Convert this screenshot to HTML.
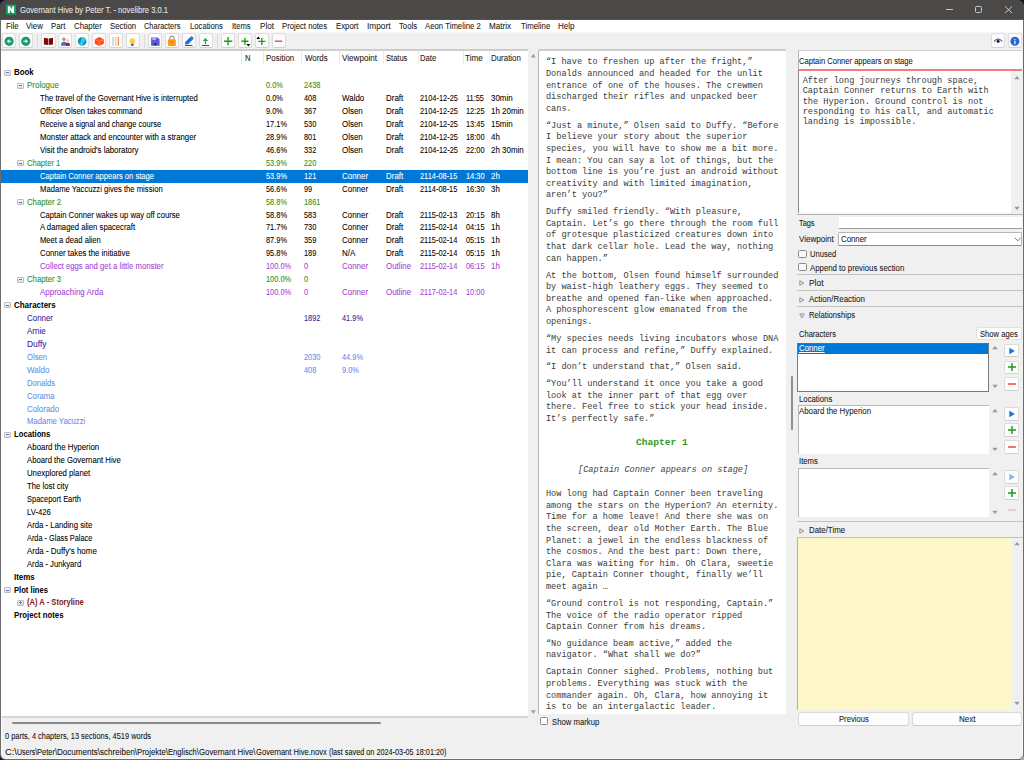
<!DOCTYPE html>
<html><head><meta charset="utf-8"><title>novelibre</title>
<style>
html,body{margin:0;padding:0;}
body{width:1024px;height:760px;overflow:hidden;background:#f0f0f0;position:relative;font-family:"Liberation Sans",sans-serif;}
body>div,body>svg{position:absolute;}
.t{white-space:pre;-webkit-text-stroke:0.07px currentColor;}
</style></head><body>
<div style="left:0px;top:0px;width:1024px;height:19px;background:#4b4947;"></div>
<div style="left:0px;top:19px;width:1024px;height:1px;background:#565452;"></div>
<svg style="left:0;top:0;position:absolute" width="20" height="20" viewBox="0 0 20 20"><rect x="6" y="4.6" width="10" height="10.1" fill="#12a064"/><path d="M7.9 6.2H9.9L12.2 9.6V6.2H14.1V13H12.1L9.8 9.6V13H7.9Z" fill="#fff"/></svg>
<div class="t" style="left:20.00px;top:4.22px;font-family:'Liberation Sans', sans-serif;font-size:8.6px;line-height:12px;color:#e6e6e6;transform:scaleX(0.8867);transform-origin:0 0;">Governant Hive by Peter T. - novelibre 3.0.1</div>
<div style="left:946.2px;top:9.4px;width:6.9px;height:1px;background:#c4c4c4;"></div>
<div style="left:974.9px;top:6.2px;width:7.3px;height:6.9px;background:none;border:1px solid #cacaca;border-radius:1.5px;box-sizing:border-box;"></div>
<svg style="left:1004px;top:6px;position:absolute" width="9" height="8" viewBox="0 0 9 8"><path d="M1.1 0.4L8.1 7.1M8.1 0.4L1.1 7.1" stroke="#d4d4d4" stroke-width="0.95"/></svg>
<div style="left:1px;top:20px;width:1022px;height:12px;background:#ffffff;"></div>
<div class="t" style="left:5.50px;top:20.15px;font-family:'Liberation Sans', sans-serif;font-size:8.5px;line-height:12px;color:#1a1a1a;transform:scaleX(0.9200);transform-origin:0 0;">File</div>
<div class="t" style="left:26.00px;top:20.15px;font-family:'Liberation Sans', sans-serif;font-size:8.5px;line-height:12px;color:#1a1a1a;transform:scaleX(0.9200);transform-origin:0 0;">View</div>
<div class="t" style="left:51.00px;top:20.15px;font-family:'Liberation Sans', sans-serif;font-size:8.5px;line-height:12px;color:#1a1a1a;transform:scaleX(0.9200);transform-origin:0 0;">Part</div>
<div class="t" style="left:74.00px;top:20.15px;font-family:'Liberation Sans', sans-serif;font-size:8.5px;line-height:12px;color:#1a1a1a;transform:scaleX(0.9200);transform-origin:0 0;">Chapter</div>
<div class="t" style="left:110.00px;top:20.15px;font-family:'Liberation Sans', sans-serif;font-size:8.5px;line-height:12px;color:#1a1a1a;transform:scaleX(0.9200);transform-origin:0 0;">Section</div>
<div class="t" style="left:144.30px;top:20.15px;font-family:'Liberation Sans', sans-serif;font-size:8.5px;line-height:12px;color:#1a1a1a;transform:scaleX(0.8755);transform-origin:0 0;">Characters</div>
<div class="t" style="left:189.80px;top:20.15px;font-family:'Liberation Sans', sans-serif;font-size:8.5px;line-height:12px;color:#1a1a1a;transform:scaleX(0.9041);transform-origin:0 0;">Locations</div>
<div class="t" style="left:231.80px;top:20.15px;font-family:'Liberation Sans', sans-serif;font-size:8.5px;line-height:12px;color:#1a1a1a;transform:scaleX(0.8998);transform-origin:0 0;">Items</div>
<div class="t" style="left:259.50px;top:20.15px;font-family:'Liberation Sans', sans-serif;font-size:8.5px;line-height:12px;color:#1a1a1a;transform:scaleX(0.9552);transform-origin:0 0;">Plot</div>
<div class="t" style="left:282.20px;top:20.15px;font-family:'Liberation Sans', sans-serif;font-size:8.5px;line-height:12px;color:#1a1a1a;transform:scaleX(0.9068);transform-origin:0 0;">Project notes</div>
<div class="t" style="left:335.60px;top:20.15px;font-family:'Liberation Sans', sans-serif;font-size:8.5px;line-height:12px;color:#1a1a1a;transform:scaleX(0.9154);transform-origin:0 0;">Export</div>
<div class="t" style="left:366.80px;top:20.15px;font-family:'Liberation Sans', sans-serif;font-size:8.5px;line-height:12px;color:#1a1a1a;transform:scaleX(0.9754);transform-origin:0 0;">Import</div>
<div class="t" style="left:399.00px;top:20.15px;font-family:'Liberation Sans', sans-serif;font-size:8.5px;line-height:12px;color:#1a1a1a;transform:scaleX(0.9071);transform-origin:0 0;">Tools</div>
<div class="t" style="left:425.20px;top:20.15px;font-family:'Liberation Sans', sans-serif;font-size:8.5px;line-height:12px;color:#1a1a1a;transform:scaleX(0.9155);transform-origin:0 0;">Aeon Timeline 2</div>
<div class="t" style="left:489.40px;top:20.15px;font-family:'Liberation Sans', sans-serif;font-size:8.5px;line-height:12px;color:#1a1a1a;transform:scaleX(0.9507);transform-origin:0 0;">Matrix</div>
<div class="t" style="left:520.90px;top:20.15px;font-family:'Liberation Sans', sans-serif;font-size:8.5px;line-height:12px;color:#1a1a1a;transform:scaleX(0.9210);transform-origin:0 0;">Timeline</div>
<div class="t" style="left:558.40px;top:20.15px;font-family:'Liberation Sans', sans-serif;font-size:8.5px;line-height:12px;color:#1a1a1a;transform:scaleX(0.9437);transform-origin:0 0;">Help</div>
<div style="left:1px;top:32px;width:1022px;height:18px;background:#f0f0f0;"></div>
<div style="left:1px;top:32px;width:1022px;height:2px;background:linear-gradient(#fafafa,#f0f0f0);"></div>
<div style="left:2.1px;top:33.4px;width:14.3px;height:15px;background:#fcfcfc;border:1px solid #dddddd;border-bottom-color:#d2d2d2;border-radius:2.5px;box-sizing:border-box;"></div>
<div style="left:18.75px;top:33.4px;width:14.3px;height:15px;background:#fcfcfc;border:1px solid #dddddd;border-bottom-color:#d2d2d2;border-radius:2.5px;box-sizing:border-box;"></div>
<div style="left:41.3px;top:33.4px;width:14.3px;height:15px;background:#fcfcfc;border:1px solid #dddddd;border-bottom-color:#d2d2d2;border-radius:2.5px;box-sizing:border-box;"></div>
<div style="left:58.1px;top:33.4px;width:14.3px;height:15px;background:#fcfcfc;border:1px solid #dddddd;border-bottom-color:#d2d2d2;border-radius:2.5px;box-sizing:border-box;"></div>
<div style="left:74.9px;top:33.4px;width:14.3px;height:15px;background:#fcfcfc;border:1px solid #dddddd;border-bottom-color:#d2d2d2;border-radius:2.5px;box-sizing:border-box;"></div>
<div style="left:91.9px;top:33.4px;width:14.3px;height:15px;background:#fcfcfc;border:1px solid #dddddd;border-bottom-color:#d2d2d2;border-radius:2.5px;box-sizing:border-box;"></div>
<div style="left:108.9px;top:33.4px;width:14.3px;height:15px;background:#fcfcfc;border:1px solid #dddddd;border-bottom-color:#d2d2d2;border-radius:2.5px;box-sizing:border-box;"></div>
<div style="left:125.7px;top:33.4px;width:14.3px;height:15px;background:#fcfcfc;border:1px solid #dddddd;border-bottom-color:#d2d2d2;border-radius:2.5px;box-sizing:border-box;"></div>
<div style="left:148.1px;top:33.4px;width:14.3px;height:15px;background:#fcfcfc;border:1px solid #dddddd;border-bottom-color:#d2d2d2;border-radius:2.5px;box-sizing:border-box;"></div>
<div style="left:165px;top:33.4px;width:14.3px;height:15px;background:#fcfcfc;border:1px solid #dddddd;border-bottom-color:#d2d2d2;border-radius:2.5px;box-sizing:border-box;"></div>
<div style="left:181.9px;top:33.4px;width:14.3px;height:15px;background:#fcfcfc;border:1px solid #dddddd;border-bottom-color:#d2d2d2;border-radius:2.5px;box-sizing:border-box;"></div>
<div style="left:198.7px;top:33.4px;width:14.3px;height:15px;background:#fcfcfc;border:1px solid #dddddd;border-bottom-color:#d2d2d2;border-radius:2.5px;box-sizing:border-box;"></div>
<div style="left:221.1px;top:33.4px;width:14.3px;height:15px;background:#fcfcfc;border:1px solid #dddddd;border-bottom-color:#d2d2d2;border-radius:2.5px;box-sizing:border-box;"></div>
<div style="left:238px;top:33.4px;width:14.3px;height:15px;background:#fcfcfc;border:1px solid #dddddd;border-bottom-color:#d2d2d2;border-radius:2.5px;box-sizing:border-box;"></div>
<div style="left:254.9px;top:33.4px;width:14.3px;height:15px;background:#fcfcfc;border:1px solid #dddddd;border-bottom-color:#d2d2d2;border-radius:2.5px;box-sizing:border-box;"></div>
<div style="left:271.8px;top:33.4px;width:14.3px;height:15px;background:#fcfcfc;border:1px solid #dddddd;border-bottom-color:#d2d2d2;border-radius:2.5px;box-sizing:border-box;"></div>
<div style="left:37.3px;top:34px;width:1px;height:15px;background:#dcdcdc;"></div>
<div style="left:143.5px;top:34px;width:1px;height:15px;background:#dcdcdc;"></div>
<div style="left:216.6px;top:34px;width:1px;height:15px;background:#dcdcdc;"></div>
<div style="left:990.8px;top:33.4px;width:14.3px;height:15px;background:#fcfcfc;border:1px solid #dddddd;border-bottom-color:#d2d2d2;border-radius:2.5px;box-sizing:border-box;"></div>
<div style="left:1007.6px;top:33.4px;width:14.3px;height:15px;background:#fcfcfc;border:1px solid #dddddd;border-bottom-color:#d2d2d2;border-radius:2.5px;box-sizing:border-box;"></div>
<svg style="position:absolute;left:0;top:0" width="1024" height="60" viewBox="0 0 1024 60"><circle cx="9.1" cy="41.3" r="4.6" fill="#169a6a"/><path d="M6.7 41.3L9.3 39.1V43.5Z" fill="#e8f6f0"/><rect x="9" y="40.7" width="2.4" height="1.2" fill="#e8f6f0"/><circle cx="25.8" cy="41.3" r="4.6" fill="#169a6a"/><path d="M28.1 41.3L25.5 39.1V43.5Z" fill="#e8f6f0"/><rect x="23.4" y="40.7" width="2.4" height="1.2" fill="#e8f6f0"/><path d="M43.9 37.8L48.2 38.4V45L43.9 44.4Z M48.8 38.4L53 37.8V44.4L48.8 45Z" fill="#7a0a0a"/><circle cx="63.9" cy="39.2" r="1.75" fill="#c8925a"/><path d="M60.9 45.8Q60.9 41.7 64.15 41.7Q67.4 41.7 67.4 45.8Z" fill="#3b6fd4"/><circle cx="67.8" cy="40.6" r="1.35" fill="#f2c9a0"/><path d="M65.9 45.8Q65.9 42.8 68 42.8Q70.1 42.8 70.1 45.8Z" fill="#9c1040"/><circle cx="82.1" cy="41.4" r="4.4" fill="#34c6ee"/><path d="M78.2 40.2Q79.2 37.6 81.6 37.2Q81.2 39.6 80.6 41.6Q80.1 43.2 79.2 44Q78 42.4 78.2 40.2Z M82.4 45.7Q84.8 44.9 85.9 42.6Q86.4 41 86 39.8Q84.6 41.6 83.4 43.2Z" fill="#0b9190"/><path d="M99.3 37L103.8 39.3V43.8L99.3 46.1L94.8 43.8V39.3Z" fill="#ff4a1a"/><path d="M95.3 39.5L99.3 41.6L103.3 39.5M99.3 41.6V45.5" stroke="#ffd0c0" stroke-width="0.5" fill="none"/><rect x="112.5" y="37" width="1.1" height="8.8" fill="#a8c0e8"/><rect x="115.2" y="37" width="1.1" height="8.8" fill="#ffd000"/><rect x="117.8" y="37" width="1.1" height="8.8" fill="#ff6a50"/><circle cx="132.4" cy="41" r="2.8" fill="#ffc84e"/><rect x="131.2" y="43.6" width="2.4" height="2.3" fill="#555"/><path d="M151.1 37.6H157.6L159.6 39.6V45.8H151.1Z" fill="#5a5ad2"/><rect x="152.3" y="37.6" width="3.6" height="2.4" fill="#c8a8e8"/><circle cx="155.4" cy="44.3" r="1" fill="#111"/><path d="M169.7 39.6V38.4A2.2 2.2 0 0 1 174.1 38.4V39.6" stroke="#7a7a7a" stroke-width="1" fill="none"/><rect x="167.9" y="39.3" width="7.9" height="6.7" rx="1.2" fill="#ff9a00"/><circle cx="171.9" cy="42.2" r="0.9" fill="#8a8a8a"/><path d="M184.9 44.3L185.3 42.1L190.8 36.6A1 1 0 0 1 192.2 36.6L193.3 37.7A1 1 0 0 1 193.3 39.1L187.8 44.6Z" fill="#1a6af0"/><path d="M191.2 37.6L192.2 38.6" stroke="#cfe0ff" stroke-width="0.5"/><rect x="185" y="45" width="7.5" height="1" fill="#5a4848"/><path d="M202.7 41.1L205.4 38.1L208.1 41.1Z" fill="#22a244"/><rect x="204.8" y="40.6" width="1.2" height="3.6" fill="#22a244"/><rect x="201.8" y="45" width="7.3" height="1" fill="#5a4848"/><path d="M224 41.2H232.3M228.1 37.1V45.3" stroke="#1aa01a" stroke-width="1.4"/><path d="M241.4 41.2H248.4M244.9 37.7V44.7" stroke="#1aa01a" stroke-width="1.4"/><path d="M246.5 44H250.3L248.4 46.5Z" fill="#000"/><path d="M258.4 41.4H265.4M261.9 37.9V44.9" stroke="#1aa01a" stroke-width="1.4"/><path d="M256.4 39H260.2L258.3 36.5Z" fill="#000"/><path d="M274.8 41.2H282.2" stroke="#f03a3a" stroke-width="1.3"/><path d="M994 41.5Q998.1 36.6 1002.3 41.5" stroke="#444" stroke-width="1.1" fill="none"/><circle cx="998.1" cy="41.3" r="1.5" fill="#1a1070"/><circle cx="1014.9" cy="41.3" r="4.5" fill="#2a66d0"/><rect x="1014.2" y="39" width="1.4" height="0.9" fill="#dde6f8"/><rect x="1014.2" y="40.6" width="1.4" height="3.5" fill="#dde6f8"/></svg>
<div style="left:1px;top:50.8px;width:527px;height:665.5px;background:#ffffff;"></div>
<div style="left:1px;top:49.2px;width:527px;height:1.6px;background:#cdcdcd;"></div>
<div style="left:241.4px;top:50.8px;width:1px;height:14.7px;background:#ebebeb;"></div>
<div style="left:263.3px;top:50.8px;width:1px;height:14.7px;background:#ebebeb;"></div>
<div style="left:301.4px;top:50.8px;width:1px;height:14.7px;background:#ebebeb;"></div>
<div style="left:339.4px;top:50.8px;width:1px;height:14.7px;background:#ebebeb;"></div>
<div style="left:382.5px;top:50.8px;width:1px;height:14.7px;background:#ebebeb;"></div>
<div style="left:417.5px;top:50.8px;width:1px;height:14.7px;background:#ebebeb;"></div>
<div style="left:462.5px;top:50.8px;width:1px;height:14.7px;background:#ebebeb;"></div>
<div style="left:488.6px;top:50.8px;width:1px;height:14.7px;background:#ebebeb;"></div>
<div class="t" style="left:244.80px;top:52.32px;font-family:'Liberation Sans', sans-serif;font-size:8.3px;line-height:12px;color:#1a1a1a;transform:scaleX(0.9200);transform-origin:0 0;">N</div>
<div class="t" style="left:266.40px;top:52.32px;font-family:'Liberation Sans', sans-serif;font-size:8.3px;line-height:12px;color:#1a1a1a;transform:scaleX(0.9583);transform-origin:0 0;">Position</div>
<div class="t" style="left:304.50px;top:52.32px;font-family:'Liberation Sans', sans-serif;font-size:8.3px;line-height:12px;color:#1a1a1a;transform:scaleX(0.9485);transform-origin:0 0;">Words</div>
<div class="t" style="left:341.70px;top:52.32px;font-family:'Liberation Sans', sans-serif;font-size:8.3px;line-height:12px;color:#1a1a1a;transform:scaleX(0.9797);transform-origin:0 0;">Viewpoint</div>
<div class="t" style="left:386.00px;top:52.32px;font-family:'Liberation Sans', sans-serif;font-size:8.3px;line-height:12px;color:#1a1a1a;transform:scaleX(0.9094);transform-origin:0 0;">Status</div>
<div class="t" style="left:420.30px;top:52.32px;font-family:'Liberation Sans', sans-serif;font-size:8.3px;line-height:12px;color:#1a1a1a;transform:scaleX(0.9241);transform-origin:0 0;">Date</div>
<div class="t" style="left:465.20px;top:52.32px;font-family:'Liberation Sans', sans-serif;font-size:8.3px;line-height:12px;color:#1a1a1a;transform:scaleX(0.9812);transform-origin:0 0;">Time</div>
<div class="t" style="left:491.40px;top:52.32px;font-family:'Liberation Sans', sans-serif;font-size:8.3px;line-height:12px;color:#1a1a1a;transform:scaleX(0.9530);transform-origin:0 0;">Duration</div>
<div style="left:4.4px;top:69.70000000000002px;width:6.3px;height:6.0px;background:linear-gradient(#fafafa,#dcdcdc);border:1px solid #bdbdbd;box-sizing:border-box;border-radius:1px;"></div>
<div style="left:5.9px;top:72.30000000000001px;width:3.3px;height:0.8px;background:#6272c8;"></div>
<div class="t" style="left:14.00px;top:66.32px;font-family:'Liberation Sans', sans-serif;font-size:8.3px;line-height:12px;color:#000;font-weight:bold;-webkit-text-stroke:0;transform:scaleX(0.9494);transform-origin:0 0;">Book</div>
<div style="left:17.4px;top:82.63000000000002px;width:6.3px;height:6.0px;background:linear-gradient(#fafafa,#dcdcdc);border:1px solid #bdbdbd;box-sizing:border-box;border-radius:1px;"></div>
<div style="left:18.9px;top:85.23000000000002px;width:3.3px;height:0.8px;background:#6272c8;"></div>
<div class="t" style="left:27.00px;top:79.25px;font-family:'Liberation Sans', sans-serif;font-size:8.3px;line-height:12px;color:#288e28;transform:scaleX(0.9603);transform-origin:0 0;">Prologue</div>
<div class="t" style="left:266.40px;top:79.25px;font-family:'Liberation Sans', sans-serif;font-size:8.3px;line-height:12px;color:#288e28;transform:scaleX(0.8930);transform-origin:0 0;">0.0%</div>
<div class="t" style="left:304.40px;top:79.25px;font-family:'Liberation Sans', sans-serif;font-size:8.3px;line-height:12px;color:#288e28;transform:scaleX(0.8930);transform-origin:0 0;">2438</div>
<div class="t" style="left:40.00px;top:92.18px;font-family:'Liberation Sans', sans-serif;font-size:8.3px;line-height:12px;color:#000;transform:scaleX(0.9267);transform-origin:0 0;">The travel of the Governant Hive is interrupted</div>
<div class="t" style="left:266.40px;top:92.18px;font-family:'Liberation Sans', sans-serif;font-size:8.3px;line-height:12px;color:#000;transform:scaleX(0.8930);transform-origin:0 0;">0.0%</div>
<div class="t" style="left:304.40px;top:92.18px;font-family:'Liberation Sans', sans-serif;font-size:8.3px;line-height:12px;color:#000;transform:scaleX(0.8930);transform-origin:0 0;">408</div>
<div class="t" style="left:342.00px;top:92.18px;font-family:'Liberation Sans', sans-serif;font-size:8.3px;line-height:12px;color:#000;transform:scaleX(0.9580);transform-origin:0 0;">Waldo</div>
<div class="t" style="left:386.00px;top:92.18px;font-family:'Liberation Sans', sans-serif;font-size:8.3px;line-height:12px;color:#000;transform:scaleX(0.9580);transform-origin:0 0;">Draft</div>
<div class="t" style="left:420.30px;top:92.18px;font-family:'Liberation Sans', sans-serif;font-size:8.3px;line-height:12px;color:#000;transform:scaleX(0.8930);transform-origin:0 0;">2104-12-25</div>
<div class="t" style="left:465.50px;top:92.18px;font-family:'Liberation Sans', sans-serif;font-size:8.3px;line-height:12px;color:#000;transform:scaleX(0.8930);transform-origin:0 0;">11:55</div>
<div class="t" style="left:491.30px;top:92.18px;font-family:'Liberation Sans', sans-serif;font-size:8.3px;line-height:12px;color:#000;transform:scaleX(0.9580);transform-origin:0 0;">30min</div>
<div class="t" style="left:40.00px;top:105.11px;font-family:'Liberation Sans', sans-serif;font-size:8.3px;line-height:12px;color:#000;transform:scaleX(0.9346);transform-origin:0 0;">Officer Olsen takes command</div>
<div class="t" style="left:266.40px;top:105.11px;font-family:'Liberation Sans', sans-serif;font-size:8.3px;line-height:12px;color:#000;transform:scaleX(0.8930);transform-origin:0 0;">9.0%</div>
<div class="t" style="left:304.40px;top:105.11px;font-family:'Liberation Sans', sans-serif;font-size:8.3px;line-height:12px;color:#000;transform:scaleX(0.8930);transform-origin:0 0;">367</div>
<div class="t" style="left:342.00px;top:105.11px;font-family:'Liberation Sans', sans-serif;font-size:8.3px;line-height:12px;color:#000;transform:scaleX(0.9580);transform-origin:0 0;">Olsen</div>
<div class="t" style="left:386.00px;top:105.11px;font-family:'Liberation Sans', sans-serif;font-size:8.3px;line-height:12px;color:#000;transform:scaleX(0.9580);transform-origin:0 0;">Draft</div>
<div class="t" style="left:420.30px;top:105.11px;font-family:'Liberation Sans', sans-serif;font-size:8.3px;line-height:12px;color:#000;transform:scaleX(0.8930);transform-origin:0 0;">2104-12-25</div>
<div class="t" style="left:465.50px;top:105.11px;font-family:'Liberation Sans', sans-serif;font-size:8.3px;line-height:12px;color:#000;transform:scaleX(0.8930);transform-origin:0 0;">12:25</div>
<div class="t" style="left:491.30px;top:105.11px;font-family:'Liberation Sans', sans-serif;font-size:8.3px;line-height:12px;color:#000;transform:scaleX(0.9580);transform-origin:0 0;">1h 20min</div>
<div class="t" style="left:40.00px;top:118.04px;font-family:'Liberation Sans', sans-serif;font-size:8.3px;line-height:12px;color:#000;transform:scaleX(0.9053);transform-origin:0 0;">Receive a signal and change course</div>
<div class="t" style="left:266.40px;top:118.04px;font-family:'Liberation Sans', sans-serif;font-size:8.3px;line-height:12px;color:#000;transform:scaleX(0.8930);transform-origin:0 0;">17.1%</div>
<div class="t" style="left:304.40px;top:118.04px;font-family:'Liberation Sans', sans-serif;font-size:8.3px;line-height:12px;color:#000;transform:scaleX(0.8930);transform-origin:0 0;">530</div>
<div class="t" style="left:342.00px;top:118.04px;font-family:'Liberation Sans', sans-serif;font-size:8.3px;line-height:12px;color:#000;transform:scaleX(0.9580);transform-origin:0 0;">Olsen</div>
<div class="t" style="left:386.00px;top:118.04px;font-family:'Liberation Sans', sans-serif;font-size:8.3px;line-height:12px;color:#000;transform:scaleX(0.9580);transform-origin:0 0;">Draft</div>
<div class="t" style="left:420.30px;top:118.04px;font-family:'Liberation Sans', sans-serif;font-size:8.3px;line-height:12px;color:#000;transform:scaleX(0.8930);transform-origin:0 0;">2104-12-25</div>
<div class="t" style="left:465.50px;top:118.04px;font-family:'Liberation Sans', sans-serif;font-size:8.3px;line-height:12px;color:#000;transform:scaleX(0.8930);transform-origin:0 0;">13:45</div>
<div class="t" style="left:491.30px;top:118.04px;font-family:'Liberation Sans', sans-serif;font-size:8.3px;line-height:12px;color:#000;transform:scaleX(0.9580);transform-origin:0 0;">15min</div>
<div class="t" style="left:40.00px;top:130.97px;font-family:'Liberation Sans', sans-serif;font-size:8.3px;line-height:12px;color:#000;transform:scaleX(0.9375);transform-origin:0 0;">Monster attack and encounter with a stranger</div>
<div class="t" style="left:266.40px;top:130.97px;font-family:'Liberation Sans', sans-serif;font-size:8.3px;line-height:12px;color:#000;transform:scaleX(0.8930);transform-origin:0 0;">28.9%</div>
<div class="t" style="left:304.40px;top:130.97px;font-family:'Liberation Sans', sans-serif;font-size:8.3px;line-height:12px;color:#000;transform:scaleX(0.8930);transform-origin:0 0;">801</div>
<div class="t" style="left:342.00px;top:130.97px;font-family:'Liberation Sans', sans-serif;font-size:8.3px;line-height:12px;color:#000;transform:scaleX(0.9580);transform-origin:0 0;">Olsen</div>
<div class="t" style="left:386.00px;top:130.97px;font-family:'Liberation Sans', sans-serif;font-size:8.3px;line-height:12px;color:#000;transform:scaleX(0.9580);transform-origin:0 0;">Draft</div>
<div class="t" style="left:420.30px;top:130.97px;font-family:'Liberation Sans', sans-serif;font-size:8.3px;line-height:12px;color:#000;transform:scaleX(0.8930);transform-origin:0 0;">2104-12-25</div>
<div class="t" style="left:465.50px;top:130.97px;font-family:'Liberation Sans', sans-serif;font-size:8.3px;line-height:12px;color:#000;transform:scaleX(0.8930);transform-origin:0 0;">18:00</div>
<div class="t" style="left:491.30px;top:130.97px;font-family:'Liberation Sans', sans-serif;font-size:8.3px;line-height:12px;color:#000;transform:scaleX(0.9580);transform-origin:0 0;">4h</div>
<div class="t" style="left:40.00px;top:143.90px;font-family:'Liberation Sans', sans-serif;font-size:8.3px;line-height:12px;color:#000;transform:scaleX(0.9446);transform-origin:0 0;">Visit the android&#x27;s laboratory</div>
<div class="t" style="left:266.40px;top:143.90px;font-family:'Liberation Sans', sans-serif;font-size:8.3px;line-height:12px;color:#000;transform:scaleX(0.8930);transform-origin:0 0;">46.6%</div>
<div class="t" style="left:304.40px;top:143.90px;font-family:'Liberation Sans', sans-serif;font-size:8.3px;line-height:12px;color:#000;transform:scaleX(0.8930);transform-origin:0 0;">332</div>
<div class="t" style="left:342.00px;top:143.90px;font-family:'Liberation Sans', sans-serif;font-size:8.3px;line-height:12px;color:#000;transform:scaleX(0.9580);transform-origin:0 0;">Olsen</div>
<div class="t" style="left:386.00px;top:143.90px;font-family:'Liberation Sans', sans-serif;font-size:8.3px;line-height:12px;color:#000;transform:scaleX(0.9580);transform-origin:0 0;">Draft</div>
<div class="t" style="left:420.30px;top:143.90px;font-family:'Liberation Sans', sans-serif;font-size:8.3px;line-height:12px;color:#000;transform:scaleX(0.8930);transform-origin:0 0;">2104-12-25</div>
<div class="t" style="left:465.50px;top:143.90px;font-family:'Liberation Sans', sans-serif;font-size:8.3px;line-height:12px;color:#000;transform:scaleX(0.8930);transform-origin:0 0;">22:00</div>
<div class="t" style="left:491.30px;top:143.90px;font-family:'Liberation Sans', sans-serif;font-size:8.3px;line-height:12px;color:#000;transform:scaleX(0.9580);transform-origin:0 0;">2h 30min</div>
<div style="left:17.4px;top:160.21px;width:6.3px;height:6.0px;background:linear-gradient(#fafafa,#dcdcdc);border:1px solid #bdbdbd;box-sizing:border-box;border-radius:1px;"></div>
<div style="left:18.9px;top:162.81px;width:3.3px;height:0.8px;background:#6272c8;"></div>
<div class="t" style="left:27.00px;top:156.83px;font-family:'Liberation Sans', sans-serif;font-size:8.3px;line-height:12px;color:#288e28;transform:scaleX(0.9111);transform-origin:0 0;">Chapter 1</div>
<div class="t" style="left:266.40px;top:156.83px;font-family:'Liberation Sans', sans-serif;font-size:8.3px;line-height:12px;color:#288e28;transform:scaleX(0.8930);transform-origin:0 0;">53.9%</div>
<div class="t" style="left:304.40px;top:156.83px;font-family:'Liberation Sans', sans-serif;font-size:8.3px;line-height:12px;color:#288e28;transform:scaleX(0.8930);transform-origin:0 0;">220</div>
<div style="left:1px;top:169.59px;width:527px;height:13.2px;background:#0078d7;"></div>
<div class="t" style="left:40.00px;top:169.76px;font-family:'Liberation Sans', sans-serif;font-size:8.3px;line-height:12px;color:#fff;transform:scaleX(0.9153);transform-origin:0 0;">Captain Conner appears on stage</div>
<div class="t" style="left:266.40px;top:169.76px;font-family:'Liberation Sans', sans-serif;font-size:8.3px;line-height:12px;color:#fff;transform:scaleX(0.8930);transform-origin:0 0;">53.9%</div>
<div class="t" style="left:304.40px;top:169.76px;font-family:'Liberation Sans', sans-serif;font-size:8.3px;line-height:12px;color:#fff;transform:scaleX(0.8930);transform-origin:0 0;">121</div>
<div class="t" style="left:342.00px;top:169.76px;font-family:'Liberation Sans', sans-serif;font-size:8.3px;line-height:12px;color:#fff;transform:scaleX(0.9580);transform-origin:0 0;">Conner</div>
<div class="t" style="left:386.00px;top:169.76px;font-family:'Liberation Sans', sans-serif;font-size:8.3px;line-height:12px;color:#fff;transform:scaleX(0.9580);transform-origin:0 0;">Draft</div>
<div class="t" style="left:420.30px;top:169.76px;font-family:'Liberation Sans', sans-serif;font-size:8.3px;line-height:12px;color:#fff;transform:scaleX(0.8930);transform-origin:0 0;">2114-08-15</div>
<div class="t" style="left:465.50px;top:169.76px;font-family:'Liberation Sans', sans-serif;font-size:8.3px;line-height:12px;color:#fff;transform:scaleX(0.8930);transform-origin:0 0;">14:30</div>
<div class="t" style="left:491.30px;top:169.76px;font-family:'Liberation Sans', sans-serif;font-size:8.3px;line-height:12px;color:#fff;transform:scaleX(0.9580);transform-origin:0 0;">2h</div>
<div class="t" style="left:40.00px;top:182.69px;font-family:'Liberation Sans', sans-serif;font-size:8.3px;line-height:12px;color:#000;transform:scaleX(0.9228);transform-origin:0 0;">Madame Yaccuzzi gives the mission</div>
<div class="t" style="left:266.40px;top:182.69px;font-family:'Liberation Sans', sans-serif;font-size:8.3px;line-height:12px;color:#000;transform:scaleX(0.8930);transform-origin:0 0;">56.6%</div>
<div class="t" style="left:304.40px;top:182.69px;font-family:'Liberation Sans', sans-serif;font-size:8.3px;line-height:12px;color:#000;transform:scaleX(0.8930);transform-origin:0 0;">99</div>
<div class="t" style="left:342.00px;top:182.69px;font-family:'Liberation Sans', sans-serif;font-size:8.3px;line-height:12px;color:#000;transform:scaleX(0.9580);transform-origin:0 0;">Conner</div>
<div class="t" style="left:386.00px;top:182.69px;font-family:'Liberation Sans', sans-serif;font-size:8.3px;line-height:12px;color:#000;transform:scaleX(0.9580);transform-origin:0 0;">Draft</div>
<div class="t" style="left:420.30px;top:182.69px;font-family:'Liberation Sans', sans-serif;font-size:8.3px;line-height:12px;color:#000;transform:scaleX(0.8930);transform-origin:0 0;">2114-08-15</div>
<div class="t" style="left:465.50px;top:182.69px;font-family:'Liberation Sans', sans-serif;font-size:8.3px;line-height:12px;color:#000;transform:scaleX(0.8930);transform-origin:0 0;">16:30</div>
<div class="t" style="left:491.30px;top:182.69px;font-family:'Liberation Sans', sans-serif;font-size:8.3px;line-height:12px;color:#000;transform:scaleX(0.9580);transform-origin:0 0;">3h</div>
<div style="left:17.4px;top:199.00000000000003px;width:6.3px;height:6.0px;background:linear-gradient(#fafafa,#dcdcdc);border:1px solid #bdbdbd;box-sizing:border-box;border-radius:1px;"></div>
<div style="left:18.9px;top:201.60000000000002px;width:3.3px;height:0.8px;background:#6272c8;"></div>
<div class="t" style="left:27.00px;top:195.62px;font-family:'Liberation Sans', sans-serif;font-size:8.3px;line-height:12px;color:#288e28;transform:scaleX(0.9358);transform-origin:0 0;">Chapter 2</div>
<div class="t" style="left:266.40px;top:195.62px;font-family:'Liberation Sans', sans-serif;font-size:8.3px;line-height:12px;color:#288e28;transform:scaleX(0.8930);transform-origin:0 0;">58.8%</div>
<div class="t" style="left:304.40px;top:195.62px;font-family:'Liberation Sans', sans-serif;font-size:8.3px;line-height:12px;color:#288e28;transform:scaleX(0.8930);transform-origin:0 0;">1861</div>
<div class="t" style="left:40.00px;top:208.55px;font-family:'Liberation Sans', sans-serif;font-size:8.3px;line-height:12px;color:#000;transform:scaleX(0.9257);transform-origin:0 0;">Captain Conner wakes up way off course</div>
<div class="t" style="left:266.40px;top:208.55px;font-family:'Liberation Sans', sans-serif;font-size:8.3px;line-height:12px;color:#000;transform:scaleX(0.8930);transform-origin:0 0;">58.8%</div>
<div class="t" style="left:304.40px;top:208.55px;font-family:'Liberation Sans', sans-serif;font-size:8.3px;line-height:12px;color:#000;transform:scaleX(0.8930);transform-origin:0 0;">583</div>
<div class="t" style="left:342.00px;top:208.55px;font-family:'Liberation Sans', sans-serif;font-size:8.3px;line-height:12px;color:#000;transform:scaleX(0.9580);transform-origin:0 0;">Conner</div>
<div class="t" style="left:386.00px;top:208.55px;font-family:'Liberation Sans', sans-serif;font-size:8.3px;line-height:12px;color:#000;transform:scaleX(0.9580);transform-origin:0 0;">Draft</div>
<div class="t" style="left:420.30px;top:208.55px;font-family:'Liberation Sans', sans-serif;font-size:8.3px;line-height:12px;color:#000;transform:scaleX(0.8930);transform-origin:0 0;">2115-02-13</div>
<div class="t" style="left:465.50px;top:208.55px;font-family:'Liberation Sans', sans-serif;font-size:8.3px;line-height:12px;color:#000;transform:scaleX(0.8930);transform-origin:0 0;">20:15</div>
<div class="t" style="left:491.30px;top:208.55px;font-family:'Liberation Sans', sans-serif;font-size:8.3px;line-height:12px;color:#000;transform:scaleX(0.9580);transform-origin:0 0;">8h</div>
<div class="t" style="left:40.00px;top:221.48px;font-family:'Liberation Sans', sans-serif;font-size:8.3px;line-height:12px;color:#000;transform:scaleX(0.9287);transform-origin:0 0;">A damaged alien spacecraft</div>
<div class="t" style="left:266.40px;top:221.48px;font-family:'Liberation Sans', sans-serif;font-size:8.3px;line-height:12px;color:#000;transform:scaleX(0.8930);transform-origin:0 0;">71.7%</div>
<div class="t" style="left:304.40px;top:221.48px;font-family:'Liberation Sans', sans-serif;font-size:8.3px;line-height:12px;color:#000;transform:scaleX(0.8930);transform-origin:0 0;">730</div>
<div class="t" style="left:342.00px;top:221.48px;font-family:'Liberation Sans', sans-serif;font-size:8.3px;line-height:12px;color:#000;transform:scaleX(0.9580);transform-origin:0 0;">Conner</div>
<div class="t" style="left:386.00px;top:221.48px;font-family:'Liberation Sans', sans-serif;font-size:8.3px;line-height:12px;color:#000;transform:scaleX(0.9580);transform-origin:0 0;">Draft</div>
<div class="t" style="left:420.30px;top:221.48px;font-family:'Liberation Sans', sans-serif;font-size:8.3px;line-height:12px;color:#000;transform:scaleX(0.8930);transform-origin:0 0;">2115-02-14</div>
<div class="t" style="left:465.50px;top:221.48px;font-family:'Liberation Sans', sans-serif;font-size:8.3px;line-height:12px;color:#000;transform:scaleX(0.8930);transform-origin:0 0;">04:15</div>
<div class="t" style="left:491.30px;top:221.48px;font-family:'Liberation Sans', sans-serif;font-size:8.3px;line-height:12px;color:#000;transform:scaleX(0.9580);transform-origin:0 0;">1h</div>
<div class="t" style="left:40.00px;top:234.41px;font-family:'Liberation Sans', sans-serif;font-size:8.3px;line-height:12px;color:#000;transform:scaleX(0.9216);transform-origin:0 0;">Meet a dead alien</div>
<div class="t" style="left:266.40px;top:234.41px;font-family:'Liberation Sans', sans-serif;font-size:8.3px;line-height:12px;color:#000;transform:scaleX(0.8930);transform-origin:0 0;">87.9%</div>
<div class="t" style="left:304.40px;top:234.41px;font-family:'Liberation Sans', sans-serif;font-size:8.3px;line-height:12px;color:#000;transform:scaleX(0.8930);transform-origin:0 0;">359</div>
<div class="t" style="left:342.00px;top:234.41px;font-family:'Liberation Sans', sans-serif;font-size:8.3px;line-height:12px;color:#000;transform:scaleX(0.9580);transform-origin:0 0;">Conner</div>
<div class="t" style="left:386.00px;top:234.41px;font-family:'Liberation Sans', sans-serif;font-size:8.3px;line-height:12px;color:#000;transform:scaleX(0.9580);transform-origin:0 0;">Draft</div>
<div class="t" style="left:420.30px;top:234.41px;font-family:'Liberation Sans', sans-serif;font-size:8.3px;line-height:12px;color:#000;transform:scaleX(0.8930);transform-origin:0 0;">2115-02-14</div>
<div class="t" style="left:465.50px;top:234.41px;font-family:'Liberation Sans', sans-serif;font-size:8.3px;line-height:12px;color:#000;transform:scaleX(0.8930);transform-origin:0 0;">05:15</div>
<div class="t" style="left:491.30px;top:234.41px;font-family:'Liberation Sans', sans-serif;font-size:8.3px;line-height:12px;color:#000;transform:scaleX(0.9580);transform-origin:0 0;">1h</div>
<div class="t" style="left:40.00px;top:247.34px;font-family:'Liberation Sans', sans-serif;font-size:8.3px;line-height:12px;color:#000;transform:scaleX(0.9406);transform-origin:0 0;">Conner takes the initiative</div>
<div class="t" style="left:266.40px;top:247.34px;font-family:'Liberation Sans', sans-serif;font-size:8.3px;line-height:12px;color:#000;transform:scaleX(0.8930);transform-origin:0 0;">95.8%</div>
<div class="t" style="left:304.40px;top:247.34px;font-family:'Liberation Sans', sans-serif;font-size:8.3px;line-height:12px;color:#000;transform:scaleX(0.8930);transform-origin:0 0;">189</div>
<div class="t" style="left:342.00px;top:247.34px;font-family:'Liberation Sans', sans-serif;font-size:8.3px;line-height:12px;color:#000;transform:scaleX(0.9580);transform-origin:0 0;">N/A</div>
<div class="t" style="left:386.00px;top:247.34px;font-family:'Liberation Sans', sans-serif;font-size:8.3px;line-height:12px;color:#000;transform:scaleX(0.9580);transform-origin:0 0;">Draft</div>
<div class="t" style="left:420.30px;top:247.34px;font-family:'Liberation Sans', sans-serif;font-size:8.3px;line-height:12px;color:#000;transform:scaleX(0.8930);transform-origin:0 0;">2115-02-14</div>
<div class="t" style="left:465.50px;top:247.34px;font-family:'Liberation Sans', sans-serif;font-size:8.3px;line-height:12px;color:#000;transform:scaleX(0.8930);transform-origin:0 0;">05:15</div>
<div class="t" style="left:491.30px;top:247.34px;font-family:'Liberation Sans', sans-serif;font-size:8.3px;line-height:12px;color:#000;transform:scaleX(0.9580);transform-origin:0 0;">1h</div>
<div class="t" style="left:40.00px;top:260.27px;font-family:'Liberation Sans', sans-serif;font-size:8.3px;line-height:12px;color:#a53fd6;transform:scaleX(0.9363);transform-origin:0 0;">Collect eggs and get a little monster</div>
<div class="t" style="left:266.40px;top:260.27px;font-family:'Liberation Sans', sans-serif;font-size:8.3px;line-height:12px;color:#a53fd6;transform:scaleX(0.8930);transform-origin:0 0;">100.0%</div>
<div class="t" style="left:304.40px;top:260.27px;font-family:'Liberation Sans', sans-serif;font-size:8.3px;line-height:12px;color:#a53fd6;transform:scaleX(0.8930);transform-origin:0 0;">0</div>
<div class="t" style="left:342.00px;top:260.27px;font-family:'Liberation Sans', sans-serif;font-size:8.3px;line-height:12px;color:#a53fd6;transform:scaleX(0.9580);transform-origin:0 0;">Conner</div>
<div class="t" style="left:386.00px;top:260.27px;font-family:'Liberation Sans', sans-serif;font-size:8.3px;line-height:12px;color:#a53fd6;transform:scaleX(0.9580);transform-origin:0 0;">Outline</div>
<div class="t" style="left:420.30px;top:260.27px;font-family:'Liberation Sans', sans-serif;font-size:8.3px;line-height:12px;color:#a53fd6;transform:scaleX(0.8930);transform-origin:0 0;">2115-02-14</div>
<div class="t" style="left:465.50px;top:260.27px;font-family:'Liberation Sans', sans-serif;font-size:8.3px;line-height:12px;color:#a53fd6;transform:scaleX(0.8930);transform-origin:0 0;">06:15</div>
<div class="t" style="left:491.30px;top:260.27px;font-family:'Liberation Sans', sans-serif;font-size:8.3px;line-height:12px;color:#a53fd6;transform:scaleX(0.9580);transform-origin:0 0;">1h</div>
<div style="left:17.4px;top:276.5799999999999px;width:6.3px;height:6.0px;background:linear-gradient(#fafafa,#dcdcdc);border:1px solid #bdbdbd;box-sizing:border-box;border-radius:1px;"></div>
<div style="left:18.9px;top:279.17999999999995px;width:3.3px;height:0.8px;background:#6272c8;"></div>
<div class="t" style="left:27.00px;top:273.20px;font-family:'Liberation Sans', sans-serif;font-size:8.3px;line-height:12px;color:#288e28;transform:scaleX(0.9358);transform-origin:0 0;">Chapter 3</div>
<div class="t" style="left:266.40px;top:273.20px;font-family:'Liberation Sans', sans-serif;font-size:8.3px;line-height:12px;color:#288e28;transform:scaleX(0.8930);transform-origin:0 0;">100.0%</div>
<div class="t" style="left:304.40px;top:273.20px;font-family:'Liberation Sans', sans-serif;font-size:8.3px;line-height:12px;color:#288e28;transform:scaleX(0.8930);transform-origin:0 0;">0</div>
<div class="t" style="left:40.00px;top:286.13px;font-family:'Liberation Sans', sans-serif;font-size:8.3px;line-height:12px;color:#a53fd6;transform:scaleX(0.9611);transform-origin:0 0;">Approaching Arda</div>
<div class="t" style="left:266.40px;top:286.13px;font-family:'Liberation Sans', sans-serif;font-size:8.3px;line-height:12px;color:#a53fd6;transform:scaleX(0.8930);transform-origin:0 0;">100.0%</div>
<div class="t" style="left:304.40px;top:286.13px;font-family:'Liberation Sans', sans-serif;font-size:8.3px;line-height:12px;color:#a53fd6;transform:scaleX(0.8930);transform-origin:0 0;">0</div>
<div class="t" style="left:342.00px;top:286.13px;font-family:'Liberation Sans', sans-serif;font-size:8.3px;line-height:12px;color:#a53fd6;transform:scaleX(0.9580);transform-origin:0 0;">Conner</div>
<div class="t" style="left:386.00px;top:286.13px;font-family:'Liberation Sans', sans-serif;font-size:8.3px;line-height:12px;color:#a53fd6;transform:scaleX(0.9580);transform-origin:0 0;">Outline</div>
<div class="t" style="left:420.30px;top:286.13px;font-family:'Liberation Sans', sans-serif;font-size:8.3px;line-height:12px;color:#a53fd6;transform:scaleX(0.8930);transform-origin:0 0;">2117-02-14</div>
<div class="t" style="left:465.50px;top:286.13px;font-family:'Liberation Sans', sans-serif;font-size:8.3px;line-height:12px;color:#a53fd6;transform:scaleX(0.8930);transform-origin:0 0;">10:00</div>
<div style="left:4.4px;top:302.43999999999994px;width:6.3px;height:6.0px;background:linear-gradient(#fafafa,#dcdcdc);border:1px solid #bdbdbd;box-sizing:border-box;border-radius:1px;"></div>
<div style="left:5.9px;top:305.03999999999996px;width:3.3px;height:0.8px;background:#6272c8;"></div>
<div class="t" style="left:14.00px;top:299.06px;font-family:'Liberation Sans', sans-serif;font-size:8.3px;line-height:12px;color:#000;font-weight:bold;-webkit-text-stroke:0;transform:scaleX(0.9594);transform-origin:0 0;">Characters</div>
<div class="t" style="left:27.20px;top:311.99px;font-family:'Liberation Sans', sans-serif;font-size:8.3px;line-height:12px;color:#33229a;transform:scaleX(0.9552);transform-origin:0 0;">Conner</div>
<div class="t" style="left:304.40px;top:311.99px;font-family:'Liberation Sans', sans-serif;font-size:8.3px;line-height:12px;color:#33229a;transform:scaleX(0.8930);transform-origin:0 0;">1892</div>
<div class="t" style="left:342.00px;top:311.99px;font-family:'Liberation Sans', sans-serif;font-size:8.3px;line-height:12px;color:#33229a;transform:scaleX(0.8930);transform-origin:0 0;">41.9%</div>
<div class="t" style="left:27.20px;top:324.92px;font-family:'Liberation Sans', sans-serif;font-size:8.3px;line-height:12px;color:#33229a;transform:scaleX(0.9600);transform-origin:0 0;">Arnie</div>
<div class="t" style="left:27.20px;top:337.85px;font-family:'Liberation Sans', sans-serif;font-size:8.3px;line-height:12px;color:#33229a;transform:scaleX(1.0094);transform-origin:0 0;">Duffy</div>
<div class="t" style="left:27.20px;top:350.78px;font-family:'Liberation Sans', sans-serif;font-size:8.3px;line-height:12px;color:#6490ea;transform:scaleX(0.9222);transform-origin:0 0;">Olsen</div>
<div class="t" style="left:304.40px;top:350.78px;font-family:'Liberation Sans', sans-serif;font-size:8.3px;line-height:12px;color:#6490ea;transform:scaleX(0.8930);transform-origin:0 0;">2030</div>
<div class="t" style="left:342.00px;top:350.78px;font-family:'Liberation Sans', sans-serif;font-size:8.3px;line-height:12px;color:#6490ea;transform:scaleX(0.8930);transform-origin:0 0;">44.9%</div>
<div class="t" style="left:27.20px;top:363.71px;font-family:'Liberation Sans', sans-serif;font-size:8.3px;line-height:12px;color:#6490ea;transform:scaleX(0.9734);transform-origin:0 0;">Waldo</div>
<div class="t" style="left:304.40px;top:363.71px;font-family:'Liberation Sans', sans-serif;font-size:8.3px;line-height:12px;color:#6490ea;transform:scaleX(0.8930);transform-origin:0 0;">408</div>
<div class="t" style="left:342.00px;top:363.71px;font-family:'Liberation Sans', sans-serif;font-size:8.3px;line-height:12px;color:#6490ea;transform:scaleX(0.8930);transform-origin:0 0;">9.0%</div>
<div class="t" style="left:27.20px;top:376.64px;font-family:'Liberation Sans', sans-serif;font-size:8.3px;line-height:12px;color:#6490ea;transform:scaleX(0.9227);transform-origin:0 0;">Donalds</div>
<div class="t" style="left:27.20px;top:389.57px;font-family:'Liberation Sans', sans-serif;font-size:8.3px;line-height:12px;color:#6490ea;transform:scaleX(0.9351);transform-origin:0 0;">Corama</div>
<div class="t" style="left:27.20px;top:402.50px;font-family:'Liberation Sans', sans-serif;font-size:8.3px;line-height:12px;color:#6490ea;transform:scaleX(0.9533);transform-origin:0 0;">Colorado</div>
<div class="t" style="left:27.20px;top:415.43px;font-family:'Liberation Sans', sans-serif;font-size:8.3px;line-height:12px;color:#6490ea;transform:scaleX(0.9256);transform-origin:0 0;">Madame Yacuzzi</div>
<div style="left:4.4px;top:431.7399999999999px;width:6.3px;height:6.0px;background:linear-gradient(#fafafa,#dcdcdc);border:1px solid #bdbdbd;box-sizing:border-box;border-radius:1px;"></div>
<div style="left:5.9px;top:434.3399999999999px;width:3.3px;height:0.8px;background:#6272c8;"></div>
<div class="t" style="left:14.00px;top:428.36px;font-family:'Liberation Sans', sans-serif;font-size:8.3px;line-height:12px;color:#000;font-weight:bold;-webkit-text-stroke:0;transform:scaleX(0.9263);transform-origin:0 0;">Locations</div>
<div class="t" style="left:27.20px;top:441.29px;font-family:'Liberation Sans', sans-serif;font-size:8.3px;line-height:12px;color:#000;transform:scaleX(0.9486);transform-origin:0 0;">Aboard the Hyperion</div>
<div class="t" style="left:27.20px;top:454.22px;font-family:'Liberation Sans', sans-serif;font-size:8.3px;line-height:12px;color:#000;transform:scaleX(0.9329);transform-origin:0 0;">Aboard the Governant Hive</div>
<div class="t" style="left:27.20px;top:467.15px;font-family:'Liberation Sans', sans-serif;font-size:8.3px;line-height:12px;color:#000;transform:scaleX(0.9385);transform-origin:0 0;">Unexplored planet</div>
<div class="t" style="left:27.20px;top:480.08px;font-family:'Liberation Sans', sans-serif;font-size:8.3px;line-height:12px;color:#000;transform:scaleX(0.9330);transform-origin:0 0;">The lost city</div>
<div class="t" style="left:27.20px;top:493.01px;font-family:'Liberation Sans', sans-serif;font-size:8.3px;line-height:12px;color:#000;transform:scaleX(0.9005);transform-origin:0 0;">Spaceport Earth</div>
<div class="t" style="left:27.20px;top:505.94px;font-family:'Liberation Sans', sans-serif;font-size:8.3px;line-height:12px;color:#000;transform:scaleX(0.9304);transform-origin:0 0;">LV-426</div>
<div class="t" style="left:27.20px;top:518.87px;font-family:'Liberation Sans', sans-serif;font-size:8.3px;line-height:12px;color:#000;transform:scaleX(0.9375);transform-origin:0 0;">Arda - Landing site</div>
<div class="t" style="left:27.20px;top:531.80px;font-family:'Liberation Sans', sans-serif;font-size:8.3px;line-height:12px;color:#000;transform:scaleX(0.8850);transform-origin:0 0;">Arda - Glass Palace</div>
<div class="t" style="left:27.20px;top:544.73px;font-family:'Liberation Sans', sans-serif;font-size:8.3px;line-height:12px;color:#000;transform:scaleX(0.9574);transform-origin:0 0;">Arda - Duffy&#x27;s home</div>
<div class="t" style="left:27.20px;top:557.66px;font-family:'Liberation Sans', sans-serif;font-size:8.3px;line-height:12px;color:#000;transform:scaleX(0.9253);transform-origin:0 0;">Arda - Junkyard</div>
<div class="t" style="left:14.00px;top:570.59px;font-family:'Liberation Sans', sans-serif;font-size:8.3px;line-height:12px;color:#000;font-weight:bold;-webkit-text-stroke:0;transform:scaleX(0.9545);transform-origin:0 0;">Items</div>
<div style="left:4.4px;top:586.9px;width:6.3px;height:6.0px;background:linear-gradient(#fafafa,#dcdcdc);border:1px solid #bdbdbd;box-sizing:border-box;border-radius:1px;"></div>
<div style="left:5.9px;top:589.5px;width:3.3px;height:0.8px;background:#6272c8;"></div>
<div class="t" style="left:14.00px;top:583.52px;font-family:'Liberation Sans', sans-serif;font-size:8.3px;line-height:12px;color:#000;font-weight:bold;-webkit-text-stroke:0;transform:scaleX(0.9189);transform-origin:0 0;">Plot lines</div>
<div style="left:17.4px;top:599.8299999999999px;width:6.3px;height:6.0px;background:linear-gradient(#fafafa,#dcdcdc);border:1px solid #bdbdbd;box-sizing:border-box;border-radius:1px;"></div>
<div style="left:18.9px;top:602.43px;width:3.3px;height:0.8px;background:#6272c8;"></div>
<div style="left:20.15px;top:601.18px;width:0.8px;height:3.3px;background:#6272c8;"></div>
<div class="t" style="left:27.00px;top:596.45px;font-family:'Liberation Sans', sans-serif;font-size:8.3px;line-height:12px;color:#821818;font-weight:bold;-webkit-text-stroke:0;transform:scaleX(0.9150);transform-origin:0 0;">(A) A - Storyline</div>
<div class="t" style="left:14.00px;top:609.38px;font-family:'Liberation Sans', sans-serif;font-size:8.3px;line-height:12px;color:#000;font-weight:bold;-webkit-text-stroke:0;transform:scaleX(0.9417);transform-origin:0 0;">Project notes</div>
<div style="left:1px;top:716.3px;width:527px;height:1.6px;background:#d7d7d7;"></div>
<div style="left:11.7px;top:722.2px;width:369px;height:1.6px;background:#8a8a8a;border-radius:1px;"></div>
<div class="t" style="left:5.00px;top:730.12px;font-family:'Liberation Sans', sans-serif;font-size:8.3px;line-height:12px;color:#111;transform:scaleX(0.8967);transform-origin:0 0;">0 parts, 4 chapters, 13 sections, 4519 words</div>
<div class="t" style="left:4.60px;top:745.62px;font-family:'Liberation Sans', sans-serif;font-size:8.3px;line-height:12px;color:#111;transform:scaleX(1.1216);transform-origin:0 0;">C:\</div>
<div class="t" style="left:16.50px;top:745.62px;font-family:'Liberation Sans', sans-serif;font-size:8.3px;line-height:12px;color:#111;transform:scaleX(0.8464);transform-origin:0 0;">Users\</div>
<div class="t" style="left:36.80px;top:745.62px;font-family:'Liberation Sans', sans-serif;font-size:8.3px;line-height:12px;color:#111;transform:scaleX(0.9124);transform-origin:0 0;">Peter\</div>
<div class="t" style="left:57.00px;top:745.62px;font-family:'Liberation Sans', sans-serif;font-size:8.3px;line-height:12px;color:#111;transform:scaleX(0.9733);transform-origin:0 0;">Documents\</div>
<div class="t" style="left:100.10px;top:745.62px;font-family:'Liberation Sans', sans-serif;font-size:8.3px;line-height:12px;color:#111;transform:scaleX(0.9691);transform-origin:0 0;">schreiben\</div>
<div class="t" style="left:137.20px;top:745.62px;font-family:'Liberation Sans', sans-serif;font-size:8.3px;line-height:12px;color:#111;transform:scaleX(0.9466);transform-origin:0 0;">Projekte\</div>
<div class="t" style="left:168.20px;top:745.62px;font-family:'Liberation Sans', sans-serif;font-size:8.3px;line-height:12px;color:#111;transform:scaleX(0.9206);transform-origin:0 0;">Englisch\</div>
<div class="t" style="left:199.20px;top:745.62px;font-family:'Liberation Sans', sans-serif;font-size:8.3px;line-height:12px;color:#111;transform:scaleX(0.9407);transform-origin:0 0;">Governant Hive\</div>
<div class="t" style="left:255.60px;top:745.62px;font-family:'Liberation Sans', sans-serif;font-size:8.3px;line-height:12px;color:#111;transform:scaleX(0.9150);transform-origin:0 0;">Governant Hive.novx </div>
<div class="t" style="left:328.60px;top:745.62px;font-family:'Liberation Sans', sans-serif;font-size:8.3px;line-height:12px;color:#111;transform:scaleX(0.8784);transform-origin:0 0;">(last saved on 2024-03-05 18:01:20)</div>
<svg style="position:absolute;left:530px;top:53px;overflow:visible" width="8" height="6" viewBox="0 0 8 6"><path d="M0.9 4.6H5.8L3.35 0.7Z" fill="#a0a0a0"/></svg>
<svg style="position:absolute;left:530px;top:709px;overflow:visible" width="8" height="6" viewBox="0 0 8 6"><path d="M0.9 1.2H5.8L3.35 5.1Z" fill="#a0a0a0"/></svg>
<div style="left:538.1px;top:50.9px;width:247.5px;height:663.1px;background:#ffffff;border-left:1.1px solid #b2b2b2;box-sizing:border-box;"></div>
<div style="left:538.1px;top:49.3px;width:247.5px;height:1.6px;background:#cdcdcd;"></div>
<div style="left:790.8px;top:375.8px;width:2px;height:54.7px;background:#8f8f8f;border-radius:1px;"></div>
<div class="t" style="left:545.90px;top:56.40px;font-family:'Liberation Mono', monospace;font-size:8.62px;line-height:12px;color:#3a3a3a;-webkit-text-stroke:0;">“I have to freshen up after the fright,”</div>
<div class="t" style="left:545.90px;top:68.04px;font-family:'Liberation Mono', monospace;font-size:8.62px;line-height:12px;color:#3a3a3a;-webkit-text-stroke:0;">Donalds announced and headed for the unlit</div>
<div class="t" style="left:545.90px;top:79.68px;font-family:'Liberation Mono', monospace;font-size:8.62px;line-height:12px;color:#3a3a3a;-webkit-text-stroke:0;">entrance of one of the houses. The crewmen</div>
<div class="t" style="left:545.90px;top:91.32px;font-family:'Liberation Mono', monospace;font-size:8.62px;line-height:12px;color:#3a3a3a;-webkit-text-stroke:0;">discharged their rifles and unpacked beer</div>
<div class="t" style="left:545.90px;top:102.96px;font-family:'Liberation Mono', monospace;font-size:8.62px;line-height:12px;color:#3a3a3a;-webkit-text-stroke:0;">cans.</div>
<div class="t" style="left:545.90px;top:119.60px;font-family:'Liberation Mono', monospace;font-size:8.62px;line-height:12px;color:#3a3a3a;-webkit-text-stroke:0;">“Just a minute,” Olsen said to Duffy. “Before</div>
<div class="t" style="left:545.90px;top:131.24px;font-family:'Liberation Mono', monospace;font-size:8.62px;line-height:12px;color:#3a3a3a;-webkit-text-stroke:0;">I believe your story about the superior</div>
<div class="t" style="left:545.90px;top:142.88px;font-family:'Liberation Mono', monospace;font-size:8.62px;line-height:12px;color:#3a3a3a;-webkit-text-stroke:0;">species, you will have to show me a bit more.</div>
<div class="t" style="left:545.90px;top:154.52px;font-family:'Liberation Mono', monospace;font-size:8.62px;line-height:12px;color:#3a3a3a;-webkit-text-stroke:0;">I mean: You can say a lot of things, but the</div>
<div class="t" style="left:545.90px;top:166.16px;font-family:'Liberation Mono', monospace;font-size:8.62px;line-height:12px;color:#3a3a3a;-webkit-text-stroke:0;">bottom line is you’re just an android without</div>
<div class="t" style="left:545.90px;top:177.80px;font-family:'Liberation Mono', monospace;font-size:8.62px;line-height:12px;color:#3a3a3a;-webkit-text-stroke:0;">creativity and with limited imagination,</div>
<div class="t" style="left:545.90px;top:189.44px;font-family:'Liberation Mono', monospace;font-size:8.62px;line-height:12px;color:#3a3a3a;-webkit-text-stroke:0;">aren’t you?”</div>
<div class="t" style="left:545.90px;top:206.10px;font-family:'Liberation Mono', monospace;font-size:8.62px;line-height:12px;color:#3a3a3a;-webkit-text-stroke:0;">Duffy smiled friendly. “With pleasure,</div>
<div class="t" style="left:545.90px;top:217.74px;font-family:'Liberation Mono', monospace;font-size:8.62px;line-height:12px;color:#3a3a3a;-webkit-text-stroke:0;">Captain. Let’s go there through the room full</div>
<div class="t" style="left:545.90px;top:229.38px;font-family:'Liberation Mono', monospace;font-size:8.62px;line-height:12px;color:#3a3a3a;-webkit-text-stroke:0;">of grotesque plasticized creatures down into</div>
<div class="t" style="left:545.90px;top:241.02px;font-family:'Liberation Mono', monospace;font-size:8.62px;line-height:12px;color:#3a3a3a;-webkit-text-stroke:0;">that dark cellar hole. Lead the way, nothing</div>
<div class="t" style="left:545.90px;top:252.66px;font-family:'Liberation Mono', monospace;font-size:8.62px;line-height:12px;color:#3a3a3a;-webkit-text-stroke:0;">can happen.”</div>
<div class="t" style="left:545.90px;top:269.50px;font-family:'Liberation Mono', monospace;font-size:8.62px;line-height:12px;color:#3a3a3a;-webkit-text-stroke:0;">At the bottom, Olsen found himself surrounded</div>
<div class="t" style="left:545.90px;top:281.14px;font-family:'Liberation Mono', monospace;font-size:8.62px;line-height:12px;color:#3a3a3a;-webkit-text-stroke:0;">by waist-high leathery eggs. They seemed to</div>
<div class="t" style="left:545.90px;top:292.78px;font-family:'Liberation Mono', monospace;font-size:8.62px;line-height:12px;color:#3a3a3a;-webkit-text-stroke:0;">breathe and opened fan-like when approached.</div>
<div class="t" style="left:545.90px;top:304.42px;font-family:'Liberation Mono', monospace;font-size:8.62px;line-height:12px;color:#3a3a3a;-webkit-text-stroke:0;">A phosphorescent glow emanated from the</div>
<div class="t" style="left:545.90px;top:316.06px;font-family:'Liberation Mono', monospace;font-size:8.62px;line-height:12px;color:#3a3a3a;-webkit-text-stroke:0;">openings.</div>
<div class="t" style="left:545.90px;top:333.40px;font-family:'Liberation Mono', monospace;font-size:8.62px;line-height:12px;color:#3a3a3a;-webkit-text-stroke:0;">“My species needs living incubators whose DNA</div>
<div class="t" style="left:545.90px;top:345.04px;font-family:'Liberation Mono', monospace;font-size:8.62px;line-height:12px;color:#3a3a3a;-webkit-text-stroke:0;">it can process and refine,” Duffy explained.</div>
<div class="t" style="left:545.90px;top:361.00px;font-family:'Liberation Mono', monospace;font-size:8.62px;line-height:12px;color:#3a3a3a;-webkit-text-stroke:0;">“I don’t understand that,” Olsen said.</div>
<div class="t" style="left:545.90px;top:378.00px;font-family:'Liberation Mono', monospace;font-size:8.62px;line-height:12px;color:#3a3a3a;-webkit-text-stroke:0;">“You’ll understand it once you take a good</div>
<div class="t" style="left:545.90px;top:389.64px;font-family:'Liberation Mono', monospace;font-size:8.62px;line-height:12px;color:#3a3a3a;-webkit-text-stroke:0;">look at the inner part of that egg over</div>
<div class="t" style="left:545.90px;top:401.28px;font-family:'Liberation Mono', monospace;font-size:8.62px;line-height:12px;color:#3a3a3a;-webkit-text-stroke:0;">there. Feel free to stick your head inside.</div>
<div class="t" style="left:545.90px;top:412.92px;font-family:'Liberation Mono', monospace;font-size:8.62px;line-height:12px;color:#3a3a3a;-webkit-text-stroke:0;">It’s perfectly safe.”</div>
<div class="t" style="left:635.90px;top:437.24px;font-family:'Liberation Mono', monospace;font-size:9.6px;line-height:12px;color:#2f9a2f;font-weight:bold;-webkit-text-stroke:0;">Chapter 1</div>
<div class="t" style="left:578.00px;top:463.61px;font-family:'Liberation Mono', monospace;font-size:8.6px;line-height:12px;color:#444444;font-style:italic;-webkit-text-stroke:0;">[Captain Conner appears on stage]</div>
<div class="t" style="left:545.90px;top:488.00px;font-family:'Liberation Mono', monospace;font-size:8.62px;line-height:12px;color:#3a3a3a;-webkit-text-stroke:0;">How long had Captain Conner been traveling</div>
<div class="t" style="left:545.90px;top:499.64px;font-family:'Liberation Mono', monospace;font-size:8.62px;line-height:12px;color:#3a3a3a;-webkit-text-stroke:0;">among the stars on the Hyperion? An eternity.</div>
<div class="t" style="left:545.90px;top:511.28px;font-family:'Liberation Mono', monospace;font-size:8.62px;line-height:12px;color:#3a3a3a;-webkit-text-stroke:0;">Time for a home leave! And there she was on</div>
<div class="t" style="left:545.90px;top:522.92px;font-family:'Liberation Mono', monospace;font-size:8.62px;line-height:12px;color:#3a3a3a;-webkit-text-stroke:0;">the screen, dear old Mother Earth. The Blue</div>
<div class="t" style="left:545.90px;top:534.56px;font-family:'Liberation Mono', monospace;font-size:8.62px;line-height:12px;color:#3a3a3a;-webkit-text-stroke:0;">Planet: a jewel in the endless blackness of</div>
<div class="t" style="left:545.90px;top:546.20px;font-family:'Liberation Mono', monospace;font-size:8.62px;line-height:12px;color:#3a3a3a;-webkit-text-stroke:0;">the cosmos. And the best part: Down there,</div>
<div class="t" style="left:545.90px;top:557.84px;font-family:'Liberation Mono', monospace;font-size:8.62px;line-height:12px;color:#3a3a3a;-webkit-text-stroke:0;">Clara was waiting for him. Oh Clara, sweetie</div>
<div class="t" style="left:545.90px;top:569.48px;font-family:'Liberation Mono', monospace;font-size:8.62px;line-height:12px;color:#3a3a3a;-webkit-text-stroke:0;">pie, Captain Conner thought, finally we’ll</div>
<div class="t" style="left:545.90px;top:581.12px;font-family:'Liberation Mono', monospace;font-size:8.62px;line-height:12px;color:#3a3a3a;-webkit-text-stroke:0;">meet again …</div>
<div class="t" style="left:545.90px;top:597.90px;font-family:'Liberation Mono', monospace;font-size:8.62px;line-height:12px;color:#3a3a3a;-webkit-text-stroke:0;">“Ground control is not responding, Captain.”</div>
<div class="t" style="left:545.90px;top:609.54px;font-family:'Liberation Mono', monospace;font-size:8.62px;line-height:12px;color:#3a3a3a;-webkit-text-stroke:0;">The voice of the radio operator ripped</div>
<div class="t" style="left:545.90px;top:621.18px;font-family:'Liberation Mono', monospace;font-size:8.62px;line-height:12px;color:#3a3a3a;-webkit-text-stroke:0;">Captain Conner from his dreams.</div>
<div class="t" style="left:545.90px;top:637.80px;font-family:'Liberation Mono', monospace;font-size:8.62px;line-height:12px;color:#3a3a3a;-webkit-text-stroke:0;">“No guidance beam active,” added the</div>
<div class="t" style="left:545.90px;top:649.44px;font-family:'Liberation Mono', monospace;font-size:8.62px;line-height:12px;color:#3a3a3a;-webkit-text-stroke:0;">navigator. “What shall we do?”</div>
<div class="t" style="left:545.90px;top:666.40px;font-family:'Liberation Mono', monospace;font-size:8.62px;line-height:12px;color:#3a3a3a;-webkit-text-stroke:0;">Captain Conner sighed. Problems, nothing but</div>
<div class="t" style="left:545.90px;top:678.04px;font-family:'Liberation Mono', monospace;font-size:8.62px;line-height:12px;color:#3a3a3a;-webkit-text-stroke:0;">problems. Everything was stuck with the</div>
<div class="t" style="left:545.90px;top:689.68px;font-family:'Liberation Mono', monospace;font-size:8.62px;line-height:12px;color:#3a3a3a;-webkit-text-stroke:0;">commander again. Oh, Clara, how annoying it</div>
<div class="t" style="left:545.90px;top:701.32px;font-family:'Liberation Mono', monospace;font-size:8.62px;line-height:12px;color:#3a3a3a;-webkit-text-stroke:0;">is to be an intergalactic leader.</div>
<div style="left:540px;top:717.3px;width:8px;height:8.2px;background:#fdfdfd;border:1px solid #8a8a8a;border-radius:1.5px;box-sizing:border-box;"></div>
<div class="t" style="left:551.60px;top:716.02px;font-family:'Liberation Sans', sans-serif;font-size:8.3px;line-height:12px;color:#1a1a1a;transform:scaleX(0.9323);transform-origin:0 0;">Show markup</div>
<div style="left:798.0px;top:49.7px;width:224.0px;height:20.5px;background:#ffffff;border-top:1px solid #cfcfcf;border-left:1px solid #b4b4b4;box-sizing:border-box;"></div>
<div style="left:798.0px;top:69.3px;width:224.0px;height:1.9px;background:#f27c7c;"></div>
<div class="t" style="left:798.70px;top:55.22px;font-family:'Liberation Sans', sans-serif;font-size:8.3px;line-height:12px;color:#1a1a1a;transform:scaleX(0.9129);transform-origin:0 0;">Captain Conner appears on stage</div>
<div style="left:798.4px;top:71px;width:223.6px;height:142.4px;background:#ffffff;border-left:1px solid #8c8c8c;box-sizing:border-box;"></div>
<div style="left:1010.6px;top:71px;width:11.4px;height:142.4px;background:#f0f0f0;"></div>
<div class="t" style="left:802.70px;top:74.80px;font-family:'Liberation Mono', monospace;font-size:8.62px;line-height:12px;color:#3a3a3a;-webkit-text-stroke:0;">After long journeys through space,</div>
<div class="t" style="left:802.70px;top:85.17px;font-family:'Liberation Mono', monospace;font-size:8.62px;line-height:12px;color:#3a3a3a;-webkit-text-stroke:0;">Captain Conner returns to Earth with</div>
<div class="t" style="left:802.70px;top:95.54px;font-family:'Liberation Mono', monospace;font-size:8.62px;line-height:12px;color:#3a3a3a;-webkit-text-stroke:0;">the Hyperion. Ground control is not</div>
<div class="t" style="left:802.70px;top:105.91px;font-family:'Liberation Mono', monospace;font-size:8.62px;line-height:12px;color:#3a3a3a;-webkit-text-stroke:0;">responding to his call, and automatic</div>
<div class="t" style="left:802.70px;top:116.28px;font-family:'Liberation Mono', monospace;font-size:8.62px;line-height:12px;color:#3a3a3a;-webkit-text-stroke:0;">landing is impossible.</div>
<div style="left:797px;top:213.8px;width:226px;height:1.1px;background:#b4b4b4;"></div>
<div class="t" style="left:798.90px;top:217.12px;font-family:'Liberation Sans', sans-serif;font-size:8.3px;line-height:12px;color:#1a1a1a;transform:scaleX(0.8841);transform-origin:0 0;">Tags</div>
<div style="left:838.9px;top:216.8px;width:183.5px;height:12.6px;background:#ffffff;border-bottom:1px solid #9c9c9c;box-sizing:border-box;"></div>
<div class="t" style="left:798.60px;top:232.92px;font-family:'Liberation Sans', sans-serif;font-size:8.3px;line-height:12px;color:#1a1a1a;transform:scaleX(0.9685);transform-origin:0 0;">Viewpoint</div>
<div style="left:838.4px;top:232.1px;width:184px;height:13.5px;background:#ffffff;border:1px solid #b5b5b5;border-bottom-color:#8a8a8a;border-radius:1.5px;box-sizing:border-box;"></div>
<div class="t" style="left:840.50px;top:233.02px;font-family:'Liberation Sans', sans-serif;font-size:8.3px;line-height:12px;color:#1a1a1a;transform:scaleX(0.9442);transform-origin:0 0;">Conner</div>
<svg style="position:absolute;left:1014px;top:236.5px;overflow:visible" width="8" height="5" viewBox="0 0 8 5"><path d="M0.8 0.8L3.8 3.8L6.8 0.8" stroke="#555" stroke-width="0.8" fill="none"/></svg>
<div style="left:798.4px;top:249.9px;width:8.3px;height:7.9px;background:#f8f8f8;border:1px solid #8a8a8a;border-radius:1.5px;box-sizing:border-box;"></div>
<div class="t" style="left:810.20px;top:248.42px;font-family:'Liberation Sans', sans-serif;font-size:8.3px;line-height:12px;color:#1a1a1a;transform:scaleX(0.9123);transform-origin:0 0;">Unused</div>
<div style="left:798.4px;top:263.3px;width:8.3px;height:7.9px;background:#f8f8f8;border:1px solid #8a8a8a;border-radius:1.5px;box-sizing:border-box;"></div>
<div class="t" style="left:809.80px;top:262.32px;font-family:'Liberation Sans', sans-serif;font-size:8.3px;line-height:12px;color:#1a1a1a;transform:scaleX(0.9421);transform-origin:0 0;">Append to previous section</div>
<div style="left:797px;top:274.3px;width:226px;height:1.0px;background:#c2c2c2;"></div>
<div style="left:797px;top:290.2px;width:226px;height:1.0px;background:#c2c2c2;"></div>
<div style="left:797px;top:306.3px;width:226px;height:1.0px;background:#c2c2c2;"></div>
<svg style="position:absolute;left:799.2px;top:280.4px;overflow:visible" width="6" height="6" viewBox="0 0 6 6"><path d="M0.8 0.8L4.8 3L0.8 5.2Z" fill="none" stroke="#707070" stroke-width="0.7"/></svg>
<div class="t" style="left:808.80px;top:277.02px;font-family:'Liberation Sans', sans-serif;font-size:8.3px;line-height:12px;color:#1a1a1a;transform:scaleX(1.0142);transform-origin:0 0;">Plot</div>
<svg style="position:absolute;left:799.2px;top:296.6px;overflow:visible" width="6" height="6" viewBox="0 0 6 6"><path d="M0.8 0.8L4.8 3L0.8 5.2Z" fill="none" stroke="#707070" stroke-width="0.7"/></svg>
<div class="t" style="left:808.80px;top:293.22px;font-family:'Liberation Sans', sans-serif;font-size:8.3px;line-height:12px;color:#1a1a1a;transform:scaleX(0.9634);transform-origin:0 0;">Action/Reaction</div>
<svg style="position:absolute;left:799.2px;top:312.8px;overflow:visible" width="6" height="6" viewBox="0 0 6 6"><path d="M0.8 1L5.2 1L3 5Z" fill="none" stroke="#707070" stroke-width="0.7"/></svg>
<div class="t" style="left:808.80px;top:309.42px;font-family:'Liberation Sans', sans-serif;font-size:8.3px;line-height:12px;color:#1a1a1a;transform:scaleX(0.9235);transform-origin:0 0;">Relationships</div>
<div class="t" style="left:798.70px;top:328.42px;font-family:'Liberation Sans', sans-serif;font-size:8.3px;line-height:12px;color:#1a1a1a;transform:scaleX(0.9094);transform-origin:0 0;">Characters</div>
<div style="left:975.6px;top:327.4px;width:46.3px;height:13.1px;background:#fbfbfb;border:1px solid #e0e0e0;border-radius:2px;box-sizing:border-box;"></div>
<div class="t" style="left:980.20px;top:328.22px;font-family:'Liberation Sans', sans-serif;font-size:8.3px;line-height:12px;color:#1a1a1a;transform:scaleX(0.9181);transform-origin:0 0;">Show ages</div>
<div style="left:797.3px;top:342.6px;width:191.4px;height:49.8px;background:#ffffff;border:1px solid #7a7a7a;border-top-color:#6a6a6a;box-sizing:border-box;"></div>
<div style="left:798.3px;top:343.6px;width:189.4px;height:10.3px;background:#0078d7;"></div>
<div class="t" style="left:798.80px;top:342.12px;font-family:'Liberation Sans', sans-serif;font-size:8.3px;line-height:12px;color:#ffffff;text-decoration:underline;transform:scaleX(0.9405);transform-origin:0 0;">Conner</div>
<svg style="position:absolute;left:991.8px;top:345.4px;overflow:visible" width="6" height="5" viewBox="0 0 6 5"><path d="M0.2 4.3H5.8L3 1Z" fill="#9a9a9a"/></svg>
<svg style="position:absolute;left:991.8px;top:384.3px;overflow:visible" width="6" height="5" viewBox="0 0 6 5"><path d="M0.2 0.7H5.8L3 4Z" fill="#9a9a9a"/></svg>
<div style="left:1004.4px;top:343.7px;width:14.7px;height:13.8px;background:#fcfcfc;border:1px solid #dcdcdc;border-bottom-color:#d0d0d0;border-radius:2px;box-sizing:border-box;"></div>
<svg style="position:absolute;left:1008.8px;top:347.55px;overflow:visible" width="6" height="6" viewBox="0 0 6 6"><path d="M0.3 -0.2L5.8 3L0.3 6.2Z" fill="#1a73e0"/></svg>
<div style="left:1004.4px;top:360.5px;width:14.7px;height:13.8px;background:#fcfcfc;border:1px solid #dcdcdc;border-bottom-color:#d0d0d0;border-radius:2px;box-sizing:border-box;"></div>
<svg style="position:absolute;left:1007.8px;top:363.35px;overflow:visible" width="8" height="8" viewBox="0 0 8 8"><path d="M0 4H8M4 0V8" stroke="#1a9e1a" stroke-width="1.5"/></svg>
<div style="left:1004.4px;top:377.4px;width:14.7px;height:13.8px;background:#fcfcfc;border:1px solid #dcdcdc;border-bottom-color:#d0d0d0;border-radius:2px;box-sizing:border-box;"></div>
<svg style="position:absolute;left:1007.8px;top:380.25px;overflow:visible" width="8" height="8" viewBox="0 0 8 8"><path d="M0.1 4H7.9" stroke="#ec3434" stroke-width="1.4"/></svg>
<div class="t" style="left:798.80px;top:392.62px;font-family:'Liberation Sans', sans-serif;font-size:8.3px;line-height:12px;color:#1a1a1a;transform:scaleX(0.9372);transform-origin:0 0;">Locations</div>
<div style="left:797.5px;top:405.3px;width:191.2px;height:49.2px;background:#ffffff;border-left:1px solid #b8b8b8;border-top:1px solid #b8b8b8;box-sizing:border-box;"></div>
<div class="t" style="left:798.80px;top:404.92px;font-family:'Liberation Sans', sans-serif;font-size:8.3px;line-height:12px;color:#1a1a1a;transform:scaleX(0.9460);transform-origin:0 0;">Aboard the Hyperion</div>
<svg style="position:absolute;left:991.8px;top:408.0px;overflow:visible" width="6" height="5" viewBox="0 0 6 5"><path d="M0.2 4.3H5.8L3 1Z" fill="#9a9a9a"/></svg>
<svg style="position:absolute;left:991.8px;top:447.0px;overflow:visible" width="6" height="5" viewBox="0 0 6 5"><path d="M0.2 0.7H5.8L3 4Z" fill="#9a9a9a"/></svg>
<div style="left:1004.4px;top:407.3px;width:14.7px;height:13.8px;background:#fcfcfc;border:1px solid #dcdcdc;border-bottom-color:#d0d0d0;border-radius:2px;box-sizing:border-box;"></div>
<svg style="position:absolute;left:1008.8px;top:411.15000000000003px;overflow:visible" width="6" height="6" viewBox="0 0 6 6"><path d="M0.3 -0.2L5.8 3L0.3 6.2Z" fill="#1a73e0"/></svg>
<div style="left:1004.4px;top:423.4px;width:14.7px;height:13.8px;background:#fcfcfc;border:1px solid #dcdcdc;border-bottom-color:#d0d0d0;border-radius:2px;box-sizing:border-box;"></div>
<svg style="position:absolute;left:1007.8px;top:426.25px;overflow:visible" width="8" height="8" viewBox="0 0 8 8"><path d="M0 4H8M4 0V8" stroke="#1a9e1a" stroke-width="1.5"/></svg>
<div style="left:1004.4px;top:440.2px;width:14.7px;height:13.8px;background:#fcfcfc;border:1px solid #dcdcdc;border-bottom-color:#d0d0d0;border-radius:2px;box-sizing:border-box;"></div>
<svg style="position:absolute;left:1007.8px;top:443.05px;overflow:visible" width="8" height="8" viewBox="0 0 8 8"><path d="M0.1 4H7.9" stroke="#ec3434" stroke-width="1.4"/></svg>
<div class="t" style="left:798.80px;top:455.32px;font-family:'Liberation Sans', sans-serif;font-size:8.3px;line-height:12px;color:#1a1a1a;transform:scaleX(0.9312);transform-origin:0 0;">Items</div>
<div style="left:797.5px;top:468.2px;width:191.2px;height:49px;background:#ffffff;border-left:1px solid #b8b8b8;border-top:1px solid #b8b8b8;box-sizing:border-box;"></div>
<svg style="position:absolute;left:991.8px;top:471.0px;overflow:visible" width="6" height="5" viewBox="0 0 6 5"><path d="M0.2 4.3H5.8L3 1Z" fill="#9a9a9a"/></svg>
<svg style="position:absolute;left:991.8px;top:510.0px;overflow:visible" width="6" height="5" viewBox="0 0 6 5"><path d="M0.2 0.7H5.8L3 4Z" fill="#9a9a9a"/></svg>
<div style="left:1004.4px;top:470.0px;width:14.7px;height:13.8px;background:#fcfcfc;border:1px solid #dcdcdc;border-bottom-color:#d0d0d0;border-radius:2px;box-sizing:border-box;"></div>
<svg style="position:absolute;left:1008.8px;top:473.85px;overflow:visible" width="6" height="6" viewBox="0 0 6 6"><path d="M0.3 -0.2L5.8 3L0.3 6.2Z" fill="#8ab4ec"/></svg>
<div style="left:1004.4px;top:486.4px;width:14.7px;height:13.8px;background:#fcfcfc;border:1px solid #dcdcdc;border-bottom-color:#d0d0d0;border-radius:2px;box-sizing:border-box;"></div>
<svg style="position:absolute;left:1007.8px;top:489.25px;overflow:visible" width="8" height="8" viewBox="0 0 8 8"><path d="M0 4H8M4 0V8" stroke="#1a9e1a" stroke-width="1.5"/></svg>
<div style="left:1004.4px;top:503.2px;width:14.7px;height:13.8px;background:none;border-radius:2px;box-sizing:border-box;"></div>
<svg style="position:absolute;left:1007.8px;top:506.05px;overflow:visible" width="8" height="8" viewBox="0 0 8 8"><path d="M0.1 4H7.9" stroke="#f4b8b8" stroke-width="1.4"/></svg>
<div style="left:797px;top:521.2px;width:226px;height:1.0px;background:#c2c2c2;"></div>
<svg style="position:absolute;left:799.2px;top:527.7px;overflow:visible" width="6" height="6" viewBox="0 0 6 6"><path d="M0.8 0.8L4.8 3L0.8 5.2Z" fill="none" stroke="#707070" stroke-width="0.7"/></svg>
<div class="t" style="left:809.00px;top:524.32px;font-family:'Liberation Sans', sans-serif;font-size:8.3px;line-height:12px;color:#1a1a1a;transform:scaleX(0.9508);transform-origin:0 0;">Date/Time</div>
<div style="left:797px;top:537.0px;width:226px;height:1.0px;background:#c2c2c2;"></div>
<div style="left:797.4px;top:538.0px;width:214.7px;height:171.5px;background:#fdf7ca;border-left:1px solid #b8b09a;box-sizing:border-box;"></div>
<svg style="position:absolute;left:1014.3px;top:541.0px;overflow:visible" width="6" height="5" viewBox="0 0 6 5"><path d="M0.2 4.3H5.8L3 1Z" fill="#9a9a9a"/></svg>
<svg style="position:absolute;left:1014.3px;top:701.3px;overflow:visible" width="6" height="5" viewBox="0 0 6 5"><path d="M0.2 0.7H5.8L3 4Z" fill="#9a9a9a"/></svg>
<svg style="position:absolute;left:1013.7px;top:74.7px;overflow:visible" width="6" height="5" viewBox="0 0 6 5"><path d="M0.2 4.3H5.8L3 1Z" fill="#9a9a9a"/></svg>
<svg style="position:absolute;left:1013.7px;top:205.5px;overflow:visible" width="6" height="5" viewBox="0 0 6 5"><path d="M0.2 0.7H5.8L3 4Z" fill="#9a9a9a"/></svg>
<div style="left:798.3px;top:711.5px;width:110.4px;height:14.9px;background:#fdfdfd;border:1px solid #dadada;border-bottom-color:#cdcdcd;border-radius:3px;box-sizing:border-box;"></div>
<div class="t" style="left:839.00px;top:713.32px;font-family:'Liberation Sans', sans-serif;font-size:8.3px;line-height:12px;color:#1a1a1a;transform:scaleX(0.9200);transform-origin:0 0;">Previous</div>
<div style="left:911.5px;top:711.5px;width:110.2px;height:14.9px;background:#fdfdfd;border:1px solid #dadada;border-bottom-color:#cdcdcd;border-radius:3px;box-sizing:border-box;"></div>
<div class="t" style="left:959.00px;top:713.32px;font-family:'Liberation Sans', sans-serif;font-size:8.3px;line-height:12px;color:#1a1a1a;transform:scaleX(0.9670);transform-origin:0 0;">Next</div>
<div style="left:0px;top:20px;width:1px;height:740px;background:#6c6c6c;"></div>
<div style="left:1023px;top:20px;width:1px;height:740px;background:#6c6c6c;"></div>
<div style="left:0px;top:759px;width:1024px;height:1px;background:#6c6c6c;"></div>
<div style="left:1px;top:716px;width:1px;height:43px;background:#fafafa;"></div>
<div style="left:1022px;top:710px;width:1px;height:49px;background:#fafafa;"></div>
<div style="left:1px;top:758px;width:1022px;height:1px;background:#fafafa;"></div>
<svg style="position:absolute;left:0;top:0" width="6" height="6"><path d="M0 0H6A6 6 0 0 0 0 6Z" fill="#0a1430"/></svg>
<svg style="position:absolute;left:1018px;top:0" width="6" height="6"><path d="M6 0H0A6 6 0 0 1 6 6Z" fill="#0a1430"/></svg>
<svg style="position:absolute;left:0;top:754px" width="6" height="6"><path d="M0 6H6A6 6 0 0 1 0 0Z" fill="#0a1430"/><path d="M0.5 0A5.5 5.5 0 0 0 6 5.5" stroke="#6c6c6c" fill="none"/></svg>
<svg style="position:absolute;left:1018px;top:754px" width="6" height="6"><path d="M6 6H0A6 6 0 0 0 6 0Z" fill="#a8a8a8"/><path d="M5.5 0A5.5 5.5 0 0 1 0 5.5" stroke="#6c6c6c" fill="none"/></svg>
</body></html>
